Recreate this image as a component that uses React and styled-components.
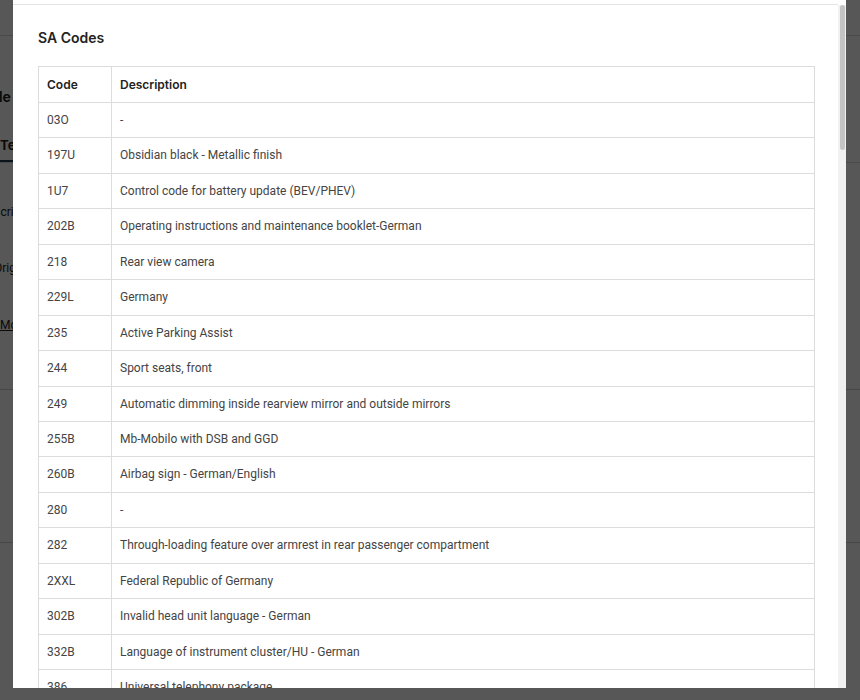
import React from "react";
import styled, { createGlobalStyle } from "styled-components";

const GlobalStyle = createGlobalStyle`
  html, body { margin: 0; padding: 0; height: 100%; overflow: hidden; background: #fff; }
  #root { height: 100%; }
`;

const rows = [
  ["03O", "-"],
  ["197U", "Obsidian black - Metallic finish"],
  ["1U7", "Control code for battery update (BEV/PHEV)"],
  ["202B", "Operating instructions and maintenance booklet-German"],
  ["218", "Rear view camera"],
  ["229L", "Germany"],
  ["235", "Active Parking Assist"],
  ["244", "Sport seats, front"],
  ["249", "Automatic dimming inside rearview mirror and outside mirrors"],
  ["255B", "Mb-Mobilo with DSB and GGD"],
  ["260B", "Airbag sign - German/English"],
  ["280", "-"],
  ["282", "Through-loading feature over armrest in rear passenger compartment"],
  ["2XXL", "Federal Republic of Germany"],
  ["302B", "Invalid head unit language - German"],
  ["332B", "Language of instrument cluster/HU - German"],
  ["386", "Universal telephony package"],
  ["401", "Climatised front seats"],
  ["413", "Panoramic sliding sunroof"],
  ["42L", "LED High Performance headlamps"],
];

const Page = styled.div`
  position: relative;
  width: 860px;
  height: 700px;
  overflow: hidden;
  font-family: "Roboto", "Liberation Sans", sans-serif;
`;

const BackPage = styled.div`
  display: flex;
  flex-direction: column;
  height: 100%;
  color: #222;
`;

const BackHeader = styled.div`
  height: 35px;
  border-bottom: 1px solid #d9d9d9;
  flex: none;
`;

const BackTitle = styled.div`
  margin-top: 52px;
  margin-left: -40px;
  font-family: "Inter", sans-serif;
  font-weight: 700;
  font-size: 14px;
  white-space: nowrap;
`;

const BackTabs = styled.div`
  margin-top: 26px;
  display: flex;
  border-bottom: 1px solid #ddd;
`;

const BackTab = styled.div`
  padding: 6px 0 7px 0;
  font-size: 13px;
  font-weight: 700;
  font-family: "Inter", sans-serif;
  border-bottom: 2px solid #1f3b57;
  white-space: nowrap;
`;

const BackLine = styled.div`
  margin-top: ${(p) => p.$mt}px;
  margin-left: ${(p) => p.$ml || 0}px;
  font-size: 12px;
  white-space: nowrap;
  text-decoration: ${(p) => (p.$link ? "underline" : "none")};
`;

const BackRule = styled.div`
  margin-top: ${(p) => p.$mt}px;
  border-top: 1px solid #ccc;
`;

const Overlay = styled.div`
  position: absolute;
  inset: 0;
  background: rgba(0, 0, 0, 0.66);
`;

const Modal = styled.div`
  position: absolute;
  left: 13px;
  top: 0;
  width: 833px;
  height: 688px;
  background: #fff;
  display: flex;
  flex-direction: column;
`;

const ModalTop = styled.div`
  height: 4px;
  flex: none;
  border-bottom: 1px solid #e4e4e4;
  margin-right: 8px;
`;

const ModalBody = styled.div`
  flex: 1;
  min-height: 0;
  display: flex;
`;

const Viewport = styled.div`
  flex: 1;
  min-width: 0;
  overflow: hidden;
`;

const ScrollTrack = styled.div`
  width: 8px;
  flex: none;
  background: #f1f1f1;
  padding: 0 1px 0 2px;
  box-sizing: border-box;
  display: flex;
  flex-direction: column;
`;

const ScrollThumb = styled.div`
  height: 145px;
  background: #c4c4c4;
  border-radius: 3px;
`;

const Content = styled.div`
  padding: 24px 23px 30px 25px;
`;

const Title = styled.h2`
  margin: 0 0 19px 0;
  font-family: "Inter", "Roboto", sans-serif;
  font-size: 14px;
  font-weight: 600;
  line-height: 18px;
  color: #222;
`;

const Table = styled.table`
  width: 100%;
  border-collapse: collapse;
  font-size: 12px;
  color: #444;
`;

const Th = styled.th`
  text-align: left;
  font-family: "Inter", "Roboto", sans-serif;
  font-weight: 600;
  font-size: 12px;
  color: #222;
  padding: 9px 8px 8px 8px;
  line-height: 18px;
  border: 1px solid #dcdcdc;
  width: ${(p) => (p.$w ? `${p.$w}px` : "auto")};
`;

const Td = styled.td`
  padding: 8px 8px;
  line-height: 18.44px;
  border: 1px solid #dcdcdc;
  font-family: "Roboto", "Liberation Sans", sans-serif;
  white-space: nowrap;
`;

export default function App() {
  return (
    <Page>
      <GlobalStyle />
      <BackPage>
        <BackHeader />
        <BackTitle>Vehicle Value</BackTitle>
        <BackTabs>
          <BackTab>Technical data</BackTab>
        </BackTabs>
        <BackLine $mt={42} $ml={-20}>Description</BackLine>
        <BackLine $mt={42} $ml={-6}>Origin</BackLine>
        <BackLine $mt={43} $link>More</BackLine>
        <BackRule $mt={57} />
        <BackRule $mt={152} />
      </BackPage>
      <Overlay />
      <Modal>
        <ModalTop />
        <ModalBody>
          <Viewport>
            <Content>
              <Title>SA Codes</Title>
              <Table>
                <thead>
                  <tr>
                    <Th $w={56}>Code</Th>
                    <Th>Description</Th>
                  </tr>
                </thead>
                <tbody>
                  {rows.map(([code, desc]) => (
                    <tr key={code + desc}>
                      <Td>{code}</Td>
                      <Td>{desc}</Td>
                    </tr>
                  ))}
                </tbody>
              </Table>
            </Content>
          </Viewport>
          <ScrollTrack>
            <ScrollThumb />
          </ScrollTrack>
        </ModalBody>
      </Modal>
    </Page>
  );
}
